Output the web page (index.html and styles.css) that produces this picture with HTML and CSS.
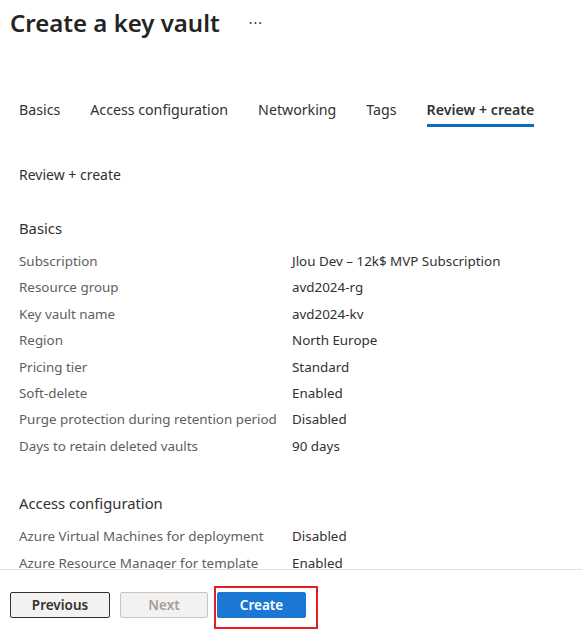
FILE: index.html
```html
<!doctype html>
<html lang="en">
<head>
	<meta charset="UTF-8">
	<title>Create a key vault</title>
	<link rel="stylesheet" href="styles.css">
</head>
<body>
<div class="page">
	<div class="content">
		<div class="title-row">
			<h1>Create a key vault</h1>
			<span class="more">&middot;&middot;&middot;</span>
		</div>

		<ul class="tabs">
			<li>Basics</li>
			<li>Access configuration</li>
			<li>Networking</li>
			<li>Tags</li>
			<li class="cur">Review + create</li>
		</ul>

		<h2 class="sub">Review + create</h2>

		<h3 class="section">Basics</h3>
		<dl class="props">
			<div class="row"><dt>Subscription</dt><dd>Jlou Dev &ndash; 12k$ MVP Subscription</dd></div>
			<div class="row"><dt>Resource group</dt><dd>avd2024-rg</dd></div>
			<div class="row"><dt>Key vault name</dt><dd>avd2024-kv</dd></div>
			<div class="row"><dt>Region</dt><dd>North Europe</dd></div>
			<div class="row"><dt>Pricing tier</dt><dd>Standard</dd></div>
			<div class="row"><dt>Soft-delete</dt><dd>Enabled</dd></div>
			<div class="row"><dt>Purge protection during retention period</dt><dd>Disabled</dd></div>
			<div class="row"><dt>Days to retain deleted vaults</dt><dd>90 days</dd></div>
		</dl>

		<h3 class="section access">Access configuration</h3>
		<dl class="props">
			<div class="row"><dt>Azure Virtual Machines for deployment</dt><dd>Disabled</dd></div>
			<div class="row"><dt>Azure Resource Manager for template deployment</dt><dd>Enabled</dd></div>
		</dl>
	</div>

	<div class="footer">
		<a href="javascript:;" class="btn">Previous</a>
		<a href="javascript:;" class="btn next disabled">Next</a>
		<a href="javascript:;" class="btn primary">Create</a>
		<span class="mark"></span>
	</div>
</div>
</body>
</html>
```

FILE: styles.css
```css
*{
	margin: 0;
	padding: 0;
}
ul {
	list-style: none;
}
body {
	font-family: "Noto Sans", "Open Sans", sans-serif;
	font-size: 13.4px;
	color: #323130;
	background: #fff;
}

.page {
	height: 637px;
	display: flex;
	flex-direction: column;
}
.content {
	flex: 1;
	overflow: hidden;
	padding: 0 19px;
}

.title-row {
	height: 44px;
	display: flex;
	align-items: center;
	margin-left: -9px;
}
.title-row h1 {
	font-size: 24px;
	font-weight: 600;
	color: #242424;
}
.title-row .more {
	margin-left: 29px;
	font-size: 14px;
	letter-spacing: 1px;
	color: #323130;
}

.tabs {
	display: flex;
	gap: 30px;
	margin-top: 56px;
}
.tabs li {
	font-size: 14.2px;
	line-height: 20px;
	padding-bottom: 4px;
	border-bottom: 3px solid transparent;
}
.tabs .cur {
	font-weight: 600;
	border-bottom-color: #0f6cbd;
}

.sub {
	font-size: 14px;
	font-weight: 400;
	line-height: 20px;
	margin-top: 38px;
}

.section {
	font-size: 14.8px;
	font-weight: 400;
	line-height: 20px;
	margin-top: 33px;
}
.section.access {
	margin-top: 34px;
}

.props {
	margin-top: 10px;
}
.props .row {
	display: flex;
	min-height: 26.4px;
	line-height: 26.4px;
}
.props dt {
	width: 265px;
	margin-right: 8px;
	flex: none;
	color: #605e5c;
}
.props dd {
	color: #323130;
}

.footer {
	position: relative;
	border-top: 1px solid #e1dfdd;
	height: 68px;
	flex: none;
	padding: 22px 10px 0;
	display: flex;
	gap: 10px;
	align-items: flex-start;
	box-sizing: border-box;
}
.btn {
	display: block;
	box-sizing: border-box;
	height: 26px;
	line-height: 24px;
	text-align: center;
	font-size: 13.5px;
	font-weight: 600;
	text-decoration: none;
	color: #323130;
	background: #f3f2f1;
	border: 1px solid #323130;
	border-radius: 2px;
	width: 100px;
}
.btn.next {
	width: 88px;
}
.btn.disabled {
	color: #a19f9d;
	border-color: #c8c6c4;
}
.btn.primary {
	width: 89px;
	margin-left: -1px;
	color: #fff;
	background: #1a78d4;
	border-color: #1a78d4;
}
/* red highlight drawn over the create button */
.mark {
	position: absolute;
	left: 214px;
	top: 16px;
	width: 104px;
	height: 43px;
	box-sizing: border-box;
	border: 2px solid #e81c24;
}
```
